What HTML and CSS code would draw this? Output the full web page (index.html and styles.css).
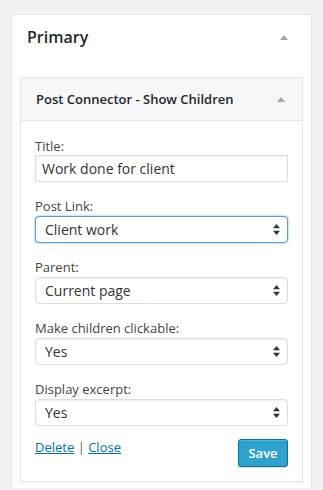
FILE: index.html
```html
<!DOCTYPE html>
<html lang="en">
<head>
    <meta charset="UTF-8">
    <meta name="viewport" content="width=device-width, initial-scale=1.0">
    <title>Primary widgets</title>
    <link rel="stylesheet" href="styles.css">
</head>
<body>
    <div class="sidebar">
        <div class="sidebar-header">
            <h2>Primary</h2>
            <span class="toggle"></span>
        </div>
        <div class="sidebar-body">
            <div class="widget">
                <div class="widget-top">
                    <h3>Post Connector - Show Children</h3>
                    <span class="toggle small"></span>
                </div>
                <div class="widget-inside">
                    <p class="field">
                        <label for="title">Title:</label>
                        <input type="text" id="title" class="text-input" value="Work done for client">
                    </p>
                    <div class="field">
                        <label for="postlink">Post Link:</label>
                        <div class="select-wrap focused">
                            <select id="postlink"><option>Client work</option></select>
                            <svg class="arrows" width="7" height="11" viewBox="0 0 7 11"><path d="M3.5 0L7 4.3H0z M3.5 11L0 6.7h7z" fill="#333"/></svg>
                        </div>
                    </div>
                    <div class="field">
                        <label for="parent">Parent:</label>
                        <div class="select-wrap">
                            <select id="parent"><option>Current page</option></select>
                            <svg class="arrows" width="7" height="11" viewBox="0 0 7 11"><path d="M3.5 0L7 4.3H0z M3.5 11L0 6.7h7z" fill="#333"/></svg>
                        </div>
                    </div>
                    <div class="field">
                        <label for="clickable">Make children clickable:</label>
                        <div class="select-wrap">
                            <select id="clickable"><option>Yes</option></select>
                            <svg class="arrows" width="7" height="11" viewBox="0 0 7 11"><path d="M3.5 0L7 4.3H0z M3.5 11L0 6.7h7z" fill="#333"/></svg>
                        </div>
                    </div>
                    <div class="field last">
                        <label for="excerpt">Display excerpt:</label>
                        <div class="select-wrap">
                            <select id="excerpt"><option>Yes</option></select>
                            <svg class="arrows" width="7" height="11" viewBox="0 0 7 11"><path d="M3.5 0L7 4.3H0z M3.5 11L0 6.7h7z" fill="#333"/></svg>
                        </div>
                    </div>
                    <div class="widget-control">
                        <div class="links">
                            <a href="#">Delete</a> | <a href="#">Close</a>
                        </div>
                        <button class="button-primary">Save</button>
                    </div>
                </div>
            </div>
        </div>
    </div>
</body>
</html>
```

FILE: styles.css
```css
* {
    margin: 0;
    padding: 0;
    box-sizing: border-box;
}

body {
    font-family: 'Open Sans', sans-serif;
    background-color: #f1f1f1;
    color: #444;
    font-size: 13px;
}

.sidebar {
    margin: 14px 11px 0;
    background: #fff;
    border: 1px solid #e5e5e5;
    border-bottom: none;
    box-shadow: 0 1px 1px rgba(0,0,0,0.04);
}

.sidebar-header {
    display: flex;
    align-items: center;
    justify-content: space-between;
    height: 44px;
    padding: 0 23px 0 15px;
}

.sidebar-header h2 {
    font-size: 16px;
    font-weight: 600;
    color: #23282d;
}

.toggle {
    width: 0;
    height: 0;
    border-left: 4px solid transparent;
    border-right: 4px solid transparent;
    border-bottom: 5px solid #a0a5aa;
}

.toggle.small {
    margin-right: 1px;
}

.sidebar-body {
    padding: 18px 8px 6px;
}

.widget {
    border: 1px solid #e5e5e5;
    box-shadow: 0 1px 1px rgba(0,0,0,0.04);
    background: #fff;
}

.widget-top {
    display: flex;
    align-items: center;
    justify-content: space-between;
    height: 43px;
    padding: 0 16px 0 15px;
    background: #f7f7f7;
    border-bottom: 1px solid #e5e5e5;
}

.widget-top h3 {
    font-size: 13px;
    font-weight: 600;
    color: #23282d;
}

.widget-inside {
    padding: 16px 14px 14px;
}

.field {
    margin-bottom: 15px;
}

.field.last {
    margin-bottom: 12px;
}

.field label {
    display: block;
    line-height: 18px;
    margin-bottom: 1px;
    color: #444;
}

p.field label {
    margin-bottom: 0;
}

.text-input {
    display: block;
    width: 100%;
    height: 27px;
    border: 1px solid #ddd;
    box-shadow: inset 0 1px 2px rgba(0,0,0,0.07);
    padding: 0 6px;
    font-family: 'Open Sans', sans-serif;
    font-size: 14px;
    color: #333;
    outline: none;
}

.select-wrap {
    position: relative;
}

.select-wrap select {
    display: block;
    width: 100%;
    height: 27px;
    -webkit-appearance: none;
    appearance: none;
    border: 1px solid #ddd;
    border-radius: 4px;
    background: #fff;
    box-shadow: inset 0 1px 2px rgba(0,0,0,0.07);
    padding: 0 9px;
    font-family: 'Open Sans', sans-serif;
    font-size: 14px;
    color: #333;
    outline: none;
}

.select-wrap.focused select {
    border-color: #5b9dd9;
    box-shadow: 0 0 2px rgba(30,140,190,0.8);
}

.arrows {
    position: absolute;
    right: 8px;
    top: 8px;
}

.widget-control {
    display: flex;
    justify-content: space-between;
    align-items: flex-start;
}

.links {
    line-height: 18px;
    color: #666;
}

.links a {
    color: #0073aa;
    text-decoration: underline;
}

.button-primary {
    width: 50px;
    height: 28px;
    background: #2ea2cc;
    border: 1px solid #0074a2;
    border-radius: 3px;
    box-shadow: inset 0 1px 0 rgba(120,200,230,0.5), 0 1px 0 rgba(0,0,0,0.15);
    color: #fff;
    font-family: 'Open Sans', sans-serif;
    font-size: 13px;
    font-weight: 600;
    margin-top: 1px;
}
```
